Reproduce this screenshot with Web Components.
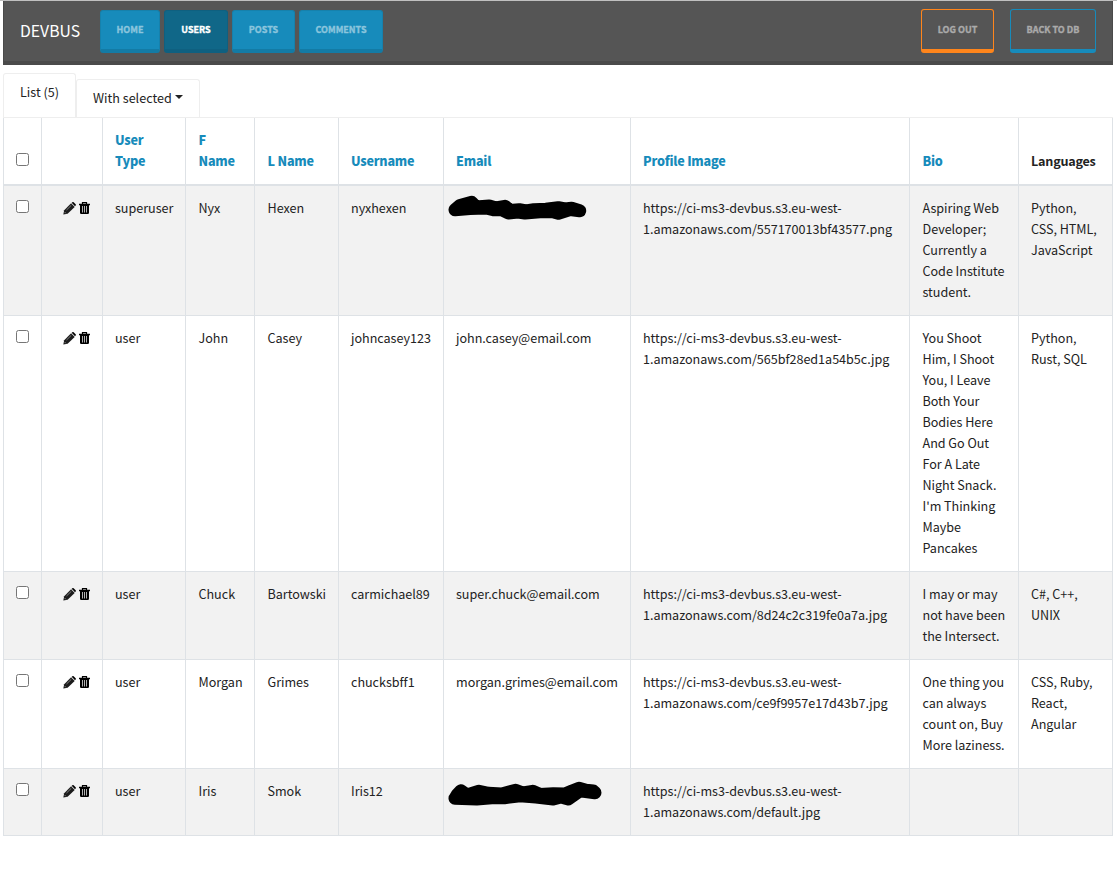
<!DOCTYPE html>
<html lang="en">
<head>
<meta charset="utf-8">
<title>Devbus admin</title>
<style>
html,body{margin:0;padding:0;background:#fff}
body{font:12.6px/21px "Noto Sans CJK SC","Noto Sans",sans-serif;color:#222;width:1117px;height:885px;overflow:hidden}
</style>
</head>
<body>
<admin-page></admin-page>
<script>
const define = (name, html, after) => customElements.define(name, class extends HTMLElement {
  connectedCallback() {
    if (this.shadowRoot) return;
    const t = document.createElement('template');
    t.innerHTML = html;
    this.attachShadow({mode:'open'}).append(t.content.cloneNode(true));
    if (after) after(this);
  }
});

define('nav-button', `<style>
:host{display:flex;box-sizing:border-box;height:43px;border:1px solid #1681ac;border-bottom:4px solid #137ba5;border-radius:3px;background:#178bbb;color:#8bc5dd;font-size:9px;font-weight:700;line-height:38px;justify-content:center;white-space:nowrap;-webkit-text-stroke:.35px currentColor}
:host([active]){background:#106788;border-color:#0f6080;color:#fff}
:host([outline]){background:none;border-color:#178bbb;height:44px;line-height:40px;color:#aaa}
:host([outline=orange]){border-color:#ff851b}
</style><slot></slot>`, el => { el.style.width = el.getAttribute('w') + 'px'; });

define('nav-bar', `<style>
:host{display:flex;box-sizing:border-box;height:64px;background:#555;border:solid #4a4a4a;border-width:0 1px 4px;align-items:flex-start;padding:9px 16px 0}
.brand{width:80px;font-size:15.75px;line-height:42px;color:#fff;white-space:nowrap}
.links{display:flex;gap:4px}
.actions{display:flex;gap:16px;margin:-1px 0 0 auto}
</style>
<div class="brand">DEVBUS</div>
<div class="links"><nav-button w="60">HOME</nav-button><nav-button w="64" active>USERS</nav-button><nav-button w="63">POSTS</nav-button><nav-button w="84">COMMENTS</nav-button></div>
<div class="actions"><nav-button w="73" outline="orange">LOG OUT</nav-button><nav-button w="86" outline>BACK TO DB</nav-button></div>`);

define('tab-strip', `<style>
:host{display:flex;height:44px;margin-top:8px;align-items:flex-end}
div{box-sizing:border-box;border:1px solid #eee;border-bottom:0;border-radius:3px 3px 0 0;padding:7px 16px 0;white-space:nowrap}
.a{width:73px;height:44px}.b{width:124px;height:38px;display:flex}
i{border:4px solid transparent;border-top-color:#222;border-bottom:0;margin:8px 0 0 3px;height:0}
</style><div class="a">List (5)</div><div class="b">With selected<i></i></div>`);

define('check-box', `<style>:host{display:block;box-sizing:border-box;width:13px;height:13px;border:1px solid #767676;border-radius:2.5px;background:#fff}</style>`);

define('row-actions', `<style>:host{display:flex;gap:3px;padding:5px 0 0 9px}svg{display:block}</style>
<svg width="13" height="13" viewBox="0 0 13 13"><path d="M.3 12.4 1.2 8.2 8.100 1.300 11.700 4.900 4.600 11.700Z" fill="#1c1c1c"/><path d="m8.700.8.6-.5q.7-.5 1.300 0l2 2q.5.7 0 1.300l-.6.6Z" fill="#000"/><path d="m3.500 8 4.800-4.700M1.600 10l1.300 1.300" stroke="#aaa" stroke-width=".7"/></svg>
<svg width="11" height="13" viewBox="0 0 11 13"><path d="M3.500 2V.6h4V2" fill="none" stroke="#000" stroke-width="1.200"/><path d="M0 1.700h11v1.500H0zM1 3h9v7.700q0 1.300-1.200 1.300H2.200Q1 12 1 10.700Z"/><path d="M3.500 4v6.500M5.500 4v6.500M7.500 4v6.500" stroke="#ddd" stroke-width=".8"/></svg>`);

define('ink-mark', `<style>:host{display:block;height:21px;margin:0 -10px 0 -8px;padding-top:1px;box-sizing:border-box}svg{display:block;overflow:visible}</style>
<svg width="155" height="20"><path fill="none" stroke="#000" stroke-width="13" stroke-linecap="round" stroke-linejoin="round"/></svg>`,
 el => el.shadowRoot.querySelector('path').setAttribute('d', el.getAttribute('shape') === 'long'
 ? 'M7 17.300 9 14 13 9.700 19 14 31 10.300 40.300 12.300 53.700 13 67.700 9.300 75 12 84.700 10.300 92 13.500 105.300 12.700 117 13 124 10 131 7.300 138 9.300 145.300 10 147 11.700 132 9.700 120.300 18 113 16 105.300 18 88 16 72 14.700 56.300 16.700 43.700 16.700 28.700 18 7 17.300'
 : 'M7 11.700 12 7.500 23.700 4.300 28 9 41.300 8 48 10 57 8.300 62 12.500 71.300 11.700 78 13 86 11.700 98 11.300 110.300 9.700 117 11 123.700 10.300 131.700 12.700 122 11.500 110.300 15.300 104 13.500 92 13.700 77 15 70 14 60.300 15 53 11.500 45.300 11.700 38 10 22 10.500 7 11.700'));

const link = s => `<b class="k">${s}</b>`;
const url = s => 'https://ci-ms3-devbus.s3.eu-west-<br>1.amazonaws.com/' + s;
const rows = [
 ['superuser','Nyx','Hexen','nyxhexen','<ink-mark></ink-mark>',url('557170013bf43577.png'),'Aspiring Web<br>Developer;<br>Currently a<br>Code Institute<br>student.','Python,<br>CSS, HTML,<br>JavaScript'],
 ['user','John','Casey','johncasey123','john.casey@email.com',url('565bf28ed1a54b5c.jpg'),"You Shoot<br>Him, I Shoot<br>You, I Leave<br>Both Your<br>Bodies Here<br>And Go Out<br>For A Late<br>Night Snack.<br>I'm Thinking<br>Maybe<br>Pancakes",'Python,<br>Rust, SQL'],
 ['user','Chuck','Bartowski','carmichael89','super.chuck@email.com',url('8d24c2c319fe0a7a.jpg'),'I may or may<br>not have been<br>the Intersect.','C#, C++,<br>UNIX'],
 ['user','Morgan','Grimes','chucksbff1','morgan.grimes@email.com',url('ce9f9957e17d43b7.jpg'),'One thing you<br>can always<br>count on, Buy<br>More laziness.','CSS, Ruby,<br>React,<br>Angular'],
 ['user','Iris','Smok','Iris12','<ink-mark shape="long"></ink-mark>',url('default.jpg'),'','']
];
const heads = ['User<br>Type','F<br>Name','L Name','Username','Email','Profile Image','Bio'];

define('user-table', `<style>
:host{display:block}
.r{display:grid;grid-template-columns:38px 61px 83px 69px 84px 105px 187px 279px 109px 95px;border-bottom:1px solid #dee2e6}
.r>div{border-left:1px solid #dee2e6;padding:11px 0 13px 12px;white-space:nowrap;min-width:0;letter-spacing:-.03px}
.r>div:nth-child(4),.r>div:nth-child(5),.r>div:nth-child(9){padding-left:12.5px}
.r>div:last-child{border-right:1px solid #dee2e6}
.h{border-top:1px solid #eee;border-bottom-width:2px}
.r.h>div{display:flex;align-items:flex-end;font-weight:700;letter-spacing:-.22px}
.k{color:#178bbb}
.odd{background:#f2f2f2}
.r check-box{margin-top:3px}
.h check-box{margin-bottom:5px}
</style>
<div class="r h"><div><check-box></check-box></div><div></div>${heads.map(h=>`<div>${link(h)}</div>`).join('')}<div>Languages</div></div>
${rows.map((r,i)=>`<div class="r ${i%2?'':'odd'}"><div><check-box></check-box></div><div><row-actions></row-actions></div>${r.map(c=>`<div>${c}</div>`).join('')}</div>`).join('')}`);

define('admin-page', `<style>:host{display:block;border-top:1px solid #c0c0c0;padding:0 4px 0 3px}</style>
<nav-bar></nav-bar><tab-strip></tab-strip><user-table></user-table>`);
</script>
</body>
</html>
